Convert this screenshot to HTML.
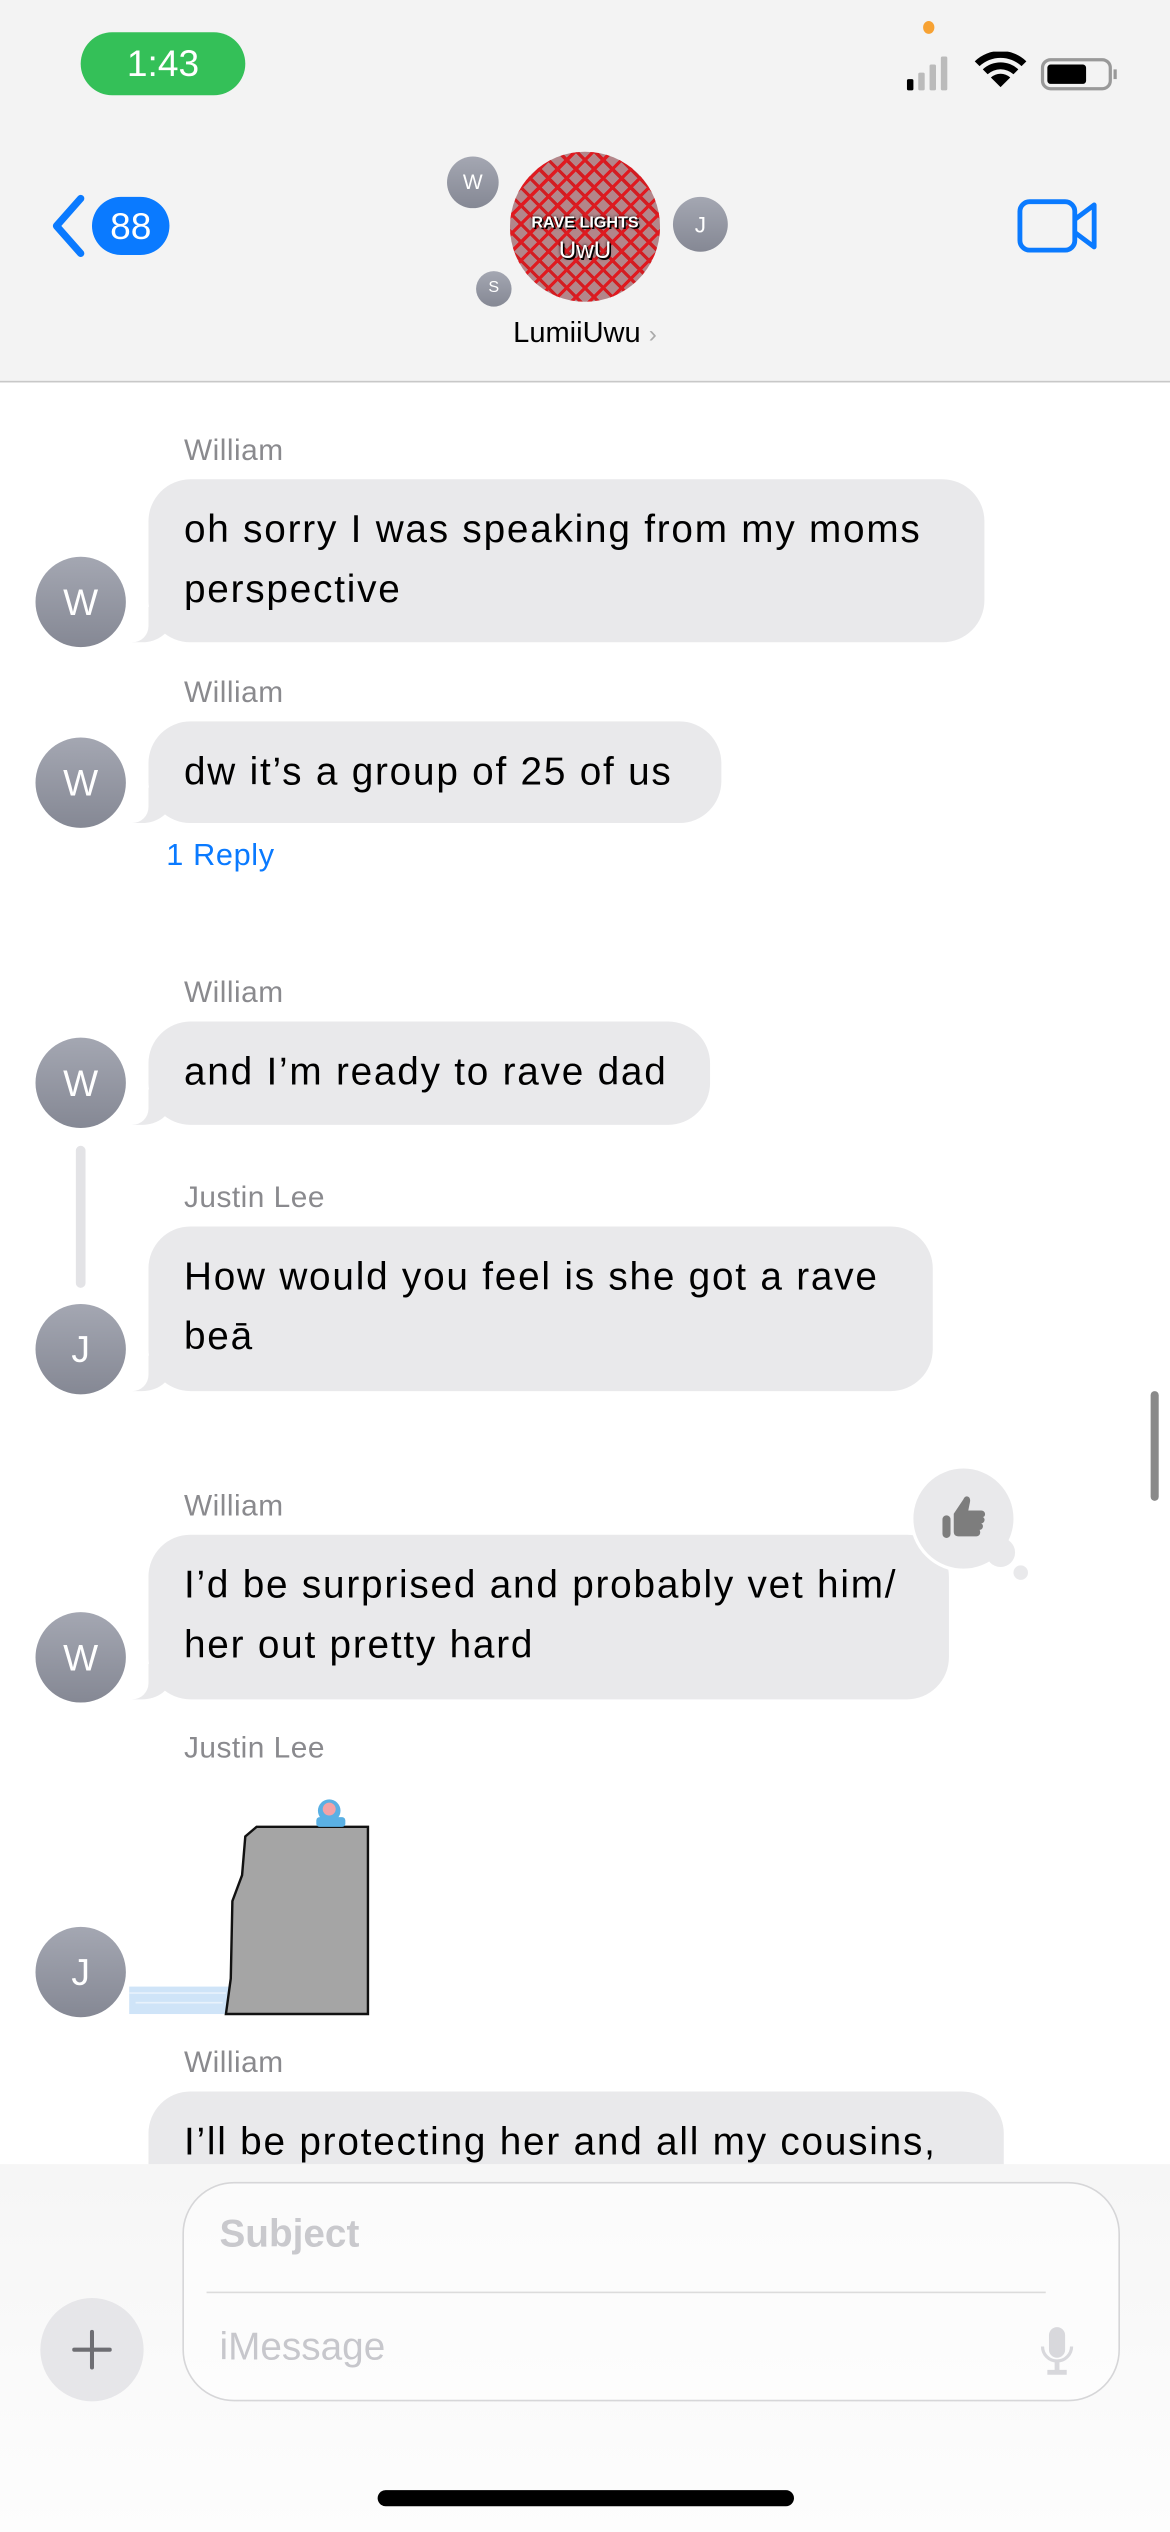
<!DOCTYPE html>
<html><head><meta charset="utf-8"><style>
html,body{margin:0;padding:0;width:1170px;height:2532px;overflow:hidden;background:#fff;}
#w{position:absolute;left:0;top:0;width:725px;height:1569px;transform:scale(1.6138);transform-origin:0 0;font-family:"Liberation Sans",sans-serif;background:#fff;overflow:hidden}
.a{position:absolute}
.hdr{left:0;top:0;width:725px;height:236px;background:#f3f3f3;border-bottom:1px solid #c8c8c8}
.av{position:absolute;border-radius:50%;background:linear-gradient(#a4a7b2,#858894);color:#fff;text-align:center}
.big{width:56px;height:56px;line-height:56px;font-size:23px}
.nm{position:absolute;left:114px;font-size:18.5px;color:#8a8a8e;letter-spacing:0.3px}
.b{position:absolute;left:92px;background:#e9e9eb;border-radius:26px;font-size:24px;letter-spacing:1.1px;color:#000;white-space:nowrap;padding:0 22px;box-sizing:border-box;line-height:37px}
.b:before{content:"";position:absolute;left:-10px;bottom:0;width:24px;height:22px;background:#e9e9eb;border-bottom-right-radius:18px 14px}
.b:after{content:"";position:absolute;left:-12px;bottom:0;width:12px;height:24px;background:#fff;border-bottom-right-radius:10px}
</style></head><body><div id="w">
<div class="a hdr"></div>
<div class="a" style="left:50px;top:20px;width:102px;height:39px;border-radius:20px;background:#34c058;color:#fff;font-size:23px;text-align:center;line-height:39px">1:43</div>
<div class="a" style="left:572px;top:13px;width:7px;height:8px;border-radius:50%;background:#f7a233"></div>
<svg class="a" style="left:560px;top:32px" width="135" height="26" viewBox="0 0 135 26">
<rect x="2" y="17" width="4" height="7" rx="1" fill="#000"/><rect x="9" y="13" width="4" height="11" rx="1" fill="#bbb"/><rect x="16" y="8" width="4" height="16" rx="1" fill="#bbb"/><rect x="23" y="3" width="4" height="21" rx="1" fill="#bbb"/>
<path d="M60 22 L54 16 A9 9 0 0 1 66 16Z" fill="#000"/><path d="M49 11 A16 16 0 0 1 71 11 L68 14 A12 12 0 0 0 52 14Z" fill="#000"/><path d="M44 6 A23 23 0 0 1 76 6 L73 9 A19 19 0 0 0 47 9Z" fill="#000"/>
<rect x="86" y="5" width="42" height="18" rx="5" fill="none" stroke="#999" stroke-width="2"/><rect x="89" y="8" width="24" height="12" rx="2" fill="#000"/><rect x="130" y="11" width="2" height="6" fill="#999"/>
</svg>
<svg class="a" style="left:30px;top:120px" width="24" height="40"><path d="M20 3 L5 20 L20 37" fill="none" stroke="#0a7aff" stroke-width="4.5" stroke-linecap="round" stroke-linejoin="round"/></svg>
<div class="a" style="left:57px;top:122px;width:48px;height:36px;border-radius:18px;background:#0a7aff;color:#fff;font-size:23px;text-align:center;line-height:36px">88</div>
<div class="a" style="left:316px;top:94px;width:93px;height:93px;border-radius:50%;overflow:hidden;background:repeating-linear-gradient(45deg,#b3868a 0 6px,#d21d22 6px 8px),#a33;">
<div style="position:absolute;inset:0;background:repeating-linear-gradient(-45deg,transparent 0 6px,#e01a20 6px 8px)"></div>
<div style="position:absolute;left:0;right:0;top:39px;text-align:center;color:#fff;font-weight:bold;font-size:10px;text-shadow:0 0 2px #000,1px 1px 0 #000">RAVE LIGHTS</div>
<div style="position:absolute;left:0;right:0;top:53px;text-align:center;color:#fff;font-size:15px;text-shadow:0 0 2px #000,1px 1px 0 #000">UwU</div></div>
<div class="av" style="left:277px;top:97px;width:32px;height:32px;line-height:32px;font-size:13px">W</div>
<div class="av" style="left:417px;top:122px;width:34px;height:34px;line-height:34px;font-size:14px">J</div>
<div class="av" style="left:295px;top:168px;width:22px;height:22px;line-height:22px;font-size:10px">S</div>
<div class="a" style="left:0;width:725px;top:196px;text-align:center;font-size:18px;color:#000">LumiiUwu <span style="color:#aaa;font-size:15px">&#x203A;</span></div>
<svg class="a" style="left:630px;top:123px" width="52" height="34"><rect x="2" y="2" width="34" height="30" rx="6" fill="none" stroke="#0a7aff" stroke-width="3"/><path d="M36 13 L48 4 V30 L36 21" fill="none" stroke="#0a7aff" stroke-width="3" stroke-linejoin="round"/></svg>

<div class="nm" style="top:268px">William</div>
<div class="b" style="top:297px;width:518px;height:101px;padding-top:13px">oh sorry I was speaking from my moms<br>perspective</div>
<div class="av big" style="left:22px;top:345px">W</div>

<div class="nm" style="top:418px">William</div>
<div class="b" style="top:447px;width:355px;height:63px;padding-top:13px">dw it’s a group of 25 of us</div>
<div class="av big" style="left:22px;top:457px">W</div>
<div class="a" style="left:103px;top:520px;font-size:19px;color:#0a7aff;letter-spacing:0.4px">1 Reply</div>

<div class="nm" style="top:604px">William</div>
<div class="b" style="top:633px;width:348px;height:64px;padding-top:13px">and I’m ready to rave dad</div>
<div class="av big" style="left:22px;top:643px">W</div>
<div class="a" style="left:47px;top:710px;width:6px;height:88px;border-radius:3px;background:#e3e3e6"></div>

<div class="nm" style="top:731px">Justin Lee</div>
<div class="b" style="top:760px;width:486px;height:102px;padding-top:13px">How would you feel is she got a rave<br>beā</div>
<div class="av big" style="left:22px;top:808px">J</div>

<div class="nm" style="top:922px">William</div>
<div class="b" style="top:951px;width:496px;height:102px;padding-top:13px">I’d be surprised and probably vet him/<br>her out pretty hard</div>
<div class="av big" style="left:22px;top:999px">W</div>
<div class="a" style="left:564px;top:908px;width:66px;height:66px;border-radius:50%;background:#e9e9eb;border:2px solid #fff;box-sizing:border-box"></div>
<div class="a" style="left:611px;top:953px;width:18px;height:18px;border-radius:50%;background:#e9e9eb"></div>
<div class="a" style="left:628px;top:970px;width:9px;height:9px;border-radius:50%;background:#e9e9eb"></div>
<svg class="a" style="left:580px;top:923px" width="34" height="34" viewBox="0 0 34 34"><rect x="4" y="16" width="5" height="14" rx="2.5" fill="#7d7d7d"/><path d="M11 15 L17 6 C18 3 22 4 21 8 L20 13 H28 C31 13 31 17 29 17 C31 18 30 21 28 21 C30 22 29 25 27 25 C28 27 27 29 25 29 H14 C12 29 11 28 11 26Z" fill="#7d7d7d"/></svg>
<div class="a" style="left:713px;top:862px;width:5px;height:68px;border-radius:3px;background:#8a8a8a"></div>

<div class="nm" style="top:1072px">Justin Lee</div>
<svg class="a" style="left:80px;top:1108px" width="150" height="142" viewBox="0 0 150 142">
<rect x="0" y="123" width="62" height="17" fill="#cfe4f8"/><path d="M0 127 H60 M4 133 H58" stroke="#e8f2fc" stroke-width="1"/>
<path d="M60 140 L63 118 L64 70 L70 54 L72 30 L79 24 L148 24 V140Z" fill="#a5a5a5" stroke="#111" stroke-width="1.5"/>
<rect x="116" y="18" width="18" height="6" rx="2" fill="#5ab0e4"/><circle cx="124" cy="14" r="7" fill="#5ab0e4"/><circle cx="124" cy="13" r="4" fill="#f3a2a6"/>
</svg>
<div class="av big" style="left:22px;top:1194px">J</div>

<div class="nm" style="top:1267px">William</div>
<div class="b" style="top:1296px;width:530px;height:80px;padding-top:13px">I’ll be protecting her and all my cousins,</div>

<div class="a" style="left:0;top:1341px;width:725px;height:228px;background:linear-gradient(#f6f6f6,#fafafa 60%,#fdfdfd)"></div>
<div class="a" style="left:25px;top:1424px;width:64px;height:64px;border-radius:50%;background:#e6e6e9"></div>
<svg class="a" style="left:44px;top:1443px" width="26" height="26"><path d="M13 2V24M2 13H24" stroke="#6e6e73" stroke-width="2.5" stroke-linecap="round"/></svg>
<div class="a" style="left:113px;top:1352px;width:581px;height:136px;border-radius:32px;border:1.5px solid #d6d6d8;box-sizing:border-box;background:rgba(255,255,255,.5)"></div>
<div class="a" style="left:136px;top:1371px;font-size:24px;font-weight:bold;color:#c9c9cd">Subject</div>
<div class="a" style="left:128px;top:1420px;width:520px;height:1px;background:#dcdcdc"></div>
<div class="a" style="left:136px;top:1441px;font-size:24px;color:#c7c7cc">iMessage</div>
<svg class="a" style="left:643px;top:1440px" width="24" height="34"><rect x="7" y="2" width="10" height="19" rx="5" fill="#d8d8dc"/><path d="M3 14 A9 9 0 0 0 21 14" fill="none" stroke="#d8d8dc" stroke-width="2"/><path d="M12 23V29M6 30H18" stroke="#d8d8dc" stroke-width="3"/></svg>
<div class="a" style="left:234px;top:1543px;width:258px;height:10px;border-radius:5px;background:#000"></div>
</div></body></html>
